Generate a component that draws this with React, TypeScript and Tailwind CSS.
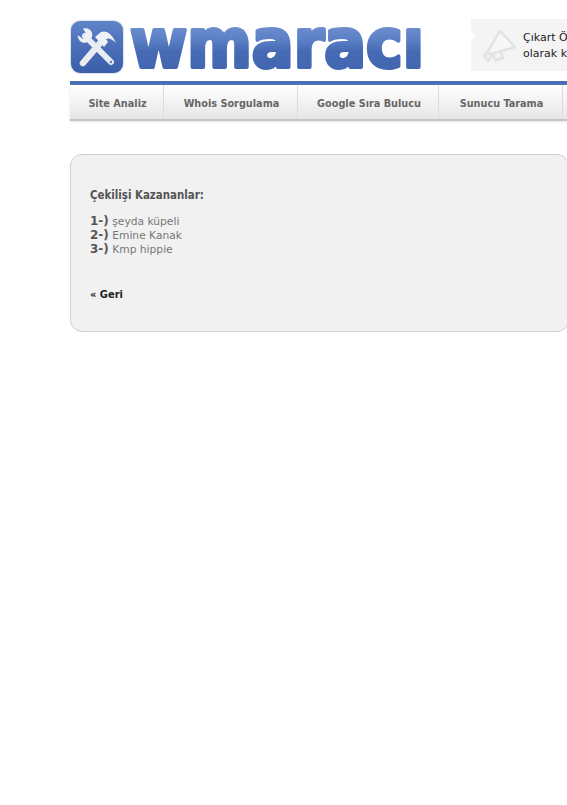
const navItems = [
  { label: "Site Analiz", width: "w-[94px]" },
  { label: "Whois Sorgulama", width: "w-[134px]" },
  { label: "Google Sıra Bulucu", width: "w-[141px]" },
  { label: "Sunucu Tarama", width: "w-[124px]" },
  { label: "", width: "w-[100px]" },
]

const winners = ["şeyda küpeli", "Emine Kanak", "Kmp hippie"]

function ToolsIcon() {
  return (
    <div className="flex h-[52px] w-[52px] shrink-0 items-center justify-center rounded-[9px] bg-gradient-to-b from-[#5f84c9] via-[#4a6fb8] to-[#3a5ea8] shadow-[0_0_2px_#8aa]">
      <svg viewBox="0 0 52 52" className="h-[52px] w-[52px]">
        {/* hammer */}
        <path d="M12 42 L30 21" stroke="#e9edf2" strokeWidth="6.5" strokeLinecap="round" />
        <path d="M24 16 L30 11 Q39 8 45 22 Q39 16 35 18 L37 21 L33 26 Z" fill="#eef1f5" />
        {/* wrench */}
        <path d="M14 15 L40 41" stroke="#e9edf2" strokeWidth="6" strokeLinecap="round" />
        <path d="M6.5 14 L12 18 L16 14 L12 7.5 Q19 6.5 21 12 Q22 16 19 19 L14 22 Q7 21 6.5 14 Z" fill="#eef1f5" />
        <circle cx="40" cy="41" r="1.3" fill="#5f7fbd" />
      </svg>
    </div>
  )
}

function Wordmark() {
  return (
    <svg viewBox="0 0 296 50" className="h-[50px] w-[296px] shrink-0 overflow-visible">
      <defs>
        <linearGradient id="logo-fill" x1="0" y1="0" x2="0" y2="1">
          <stop offset="0" stopColor="#8aa5dc" />
          <stop offset="0.45" stopColor="#5c80c6" />
          <stop offset="0.6" stopColor="#466bb4" />
          <stop offset="1" stopColor="#3f63ad" />
        </linearGradient>
      </defs>
      <text
        x="1"
        y="44"
        textLength="294"
        lengthAdjust="spacingAndGlyphs"
        fontFamily="'DejaVu Sans', sans-serif"
        fontWeight="700"
        fontSize="68"
        fill="url(#logo-fill)"
        stroke="url(#logo-fill)"
        strokeWidth="4"
        strokeLinejoin="round"
      >
        wmaracı
      </text>
    </svg>
  )
}

function Megaphone() {
  return (
    <svg viewBox="0 0 36 36" className="mt-[3px] h-[36px] w-[36px] shrink-0" fill="none" stroke="#e2e2e2" strokeWidth="2.5" strokeLinejoin="round" strokeLinecap="round">
      <path d="M18 2 L33 18 L9 25 L5 24 Z" fill="#f7f7f7" />
      <path d="M5 24 L2 27 L6 32 L10 26" />
      <path d="M11 27 L14 31 L21 29 L19 24" />
    </svg>
  )
}

export default function App() {
  return (
    <div className="h-[805px] w-[567px] overflow-hidden bg-white font-['DejaVu_Sans',sans-serif]">
      <div className="ml-[70px] w-[600px]">
        <header className="flex h-[81px] items-start pt-[19px]">
          <div className="ml-[1px] mt-[2px]">
            <ToolsIcon />
          </div>
          <div className="ml-[6px] mt-[4px]">
            <Wordmark />
          </div>
          <div className="relative ml-[46px] flex h-[52px] w-[130px] shrink-0 items-center gap-[5px] bg-[#f4f4f4] pl-[11px]">
            <span className="absolute left-0 top-[14px] h-[6px] w-[6px] -translate-x-[3px] rotate-45 bg-white" />
            <Megaphone />
            <p className="mt-[2px] whitespace-nowrap text-[11px] leading-[16px] text-[#222]">
              Çıkart Ö<br />olarak k
            </p>
          </div>
        </header>

        <div className="h-[4px] bg-[#4a6db5]" />

        <nav className="flex h-[36px] border-b-2 border-[#c4c4c4] bg-gradient-to-b from-white to-[#e6e6e6] shadow-[0_1px_2px_#e5e5e5]">
          {navItems.map((item) => (
            <div
              key={item.label || "more"}
              className={`${item.width} flex shrink-0 items-center justify-center border-r border-[#dcdcdc] pl-[2px] pt-[5px] text-[10.8px] font-bold font-stretch-condensed text-[#666]`}
            >
              {item.label}
            </div>
          ))}
        </nav>

        <main className="mt-[33px] h-[178px] w-[499px] rounded-[12px] border border-[#cfcfcf] bg-[#f1f1f1] pl-[19px] pt-[32px]">
          <h2 className="text-[11.4px] font-bold leading-[16px] font-stretch-condensed text-[#555]">Çekilişi Kazananlar:</h2>
          <ol className="mt-[12px] text-[10.7px] leading-[14px] text-[#777]">
            {winners.map((name, i) => (
              <li key={name}>
                <b className="text-[12px] leading-none font-bold text-[#555]">{i + 1}-)</b> {name}
              </li>
            ))}
          </ol>
          <a className="mt-[31px] block text-[11px] font-bold leading-[14px] font-stretch-condensed text-[#222]">« Geri</a>
        </main>
      </div>
    </div>
  )
}
